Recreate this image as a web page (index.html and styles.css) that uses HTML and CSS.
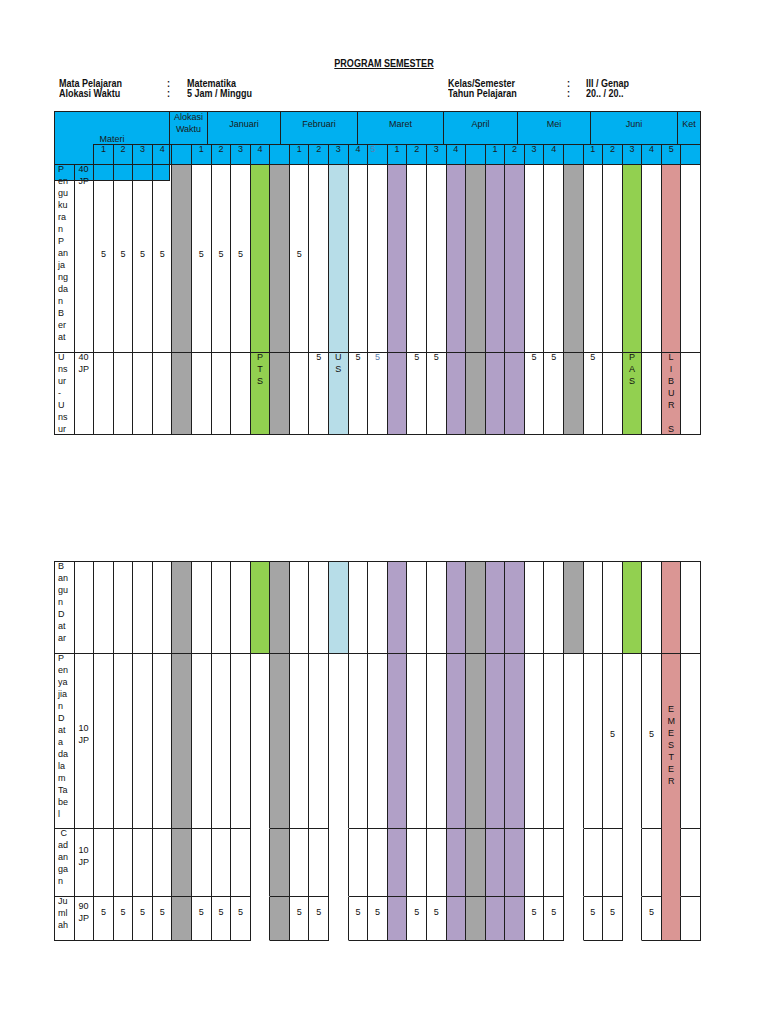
FILE: index.html
```html
<!DOCTYPE html>
<html lang="id">
<head>
<meta charset="utf-8">
<title>Program Semester</title>
<link rel="stylesheet" href="styles.css">
</head>
<body>
<div class="page">
  <h1 class="title">PROGRAM SEMESTER</h1>
  <div class="info">
    <div class="info-col left">
      <div class="info-row"><span>Mata Pelajaran</span><span>:</span><span>Matematika</span></div>
      <div class="info-row"><span>Alokasi Waktu</span><span>:</span><span>5 Jam / Minggu</span></div>
    </div>
    <div class="info-col right">
      <div class="info-row"><span>Kelas/Semester</span><span>:</span><span>III / Genap</span></div>
      <div class="info-row"><span>Tahun Pelajaran</span><span>:</span><span>20.. / 20..</span></div>
    </div>
  </div>

  <div class="sheet sheet-1">
    <div class="materi-box">Materi</div>
    <div class="hdr1">
      <div class="h h-materi"></div>
      <div class="h h-alok" style="width:38px"><span>Alokasi<br>Waktu</span></div>
      <div class="h" style="width:73px">Januari</div>
      <div class="h" style="width:77px">Februari</div>
      <div class="h" style="width:86px">Maret</div>
      <div class="h" style="width:74px">April</div>
      <div class="h" style="width:73px">Mei</div>
      <div class="h" style="width:87px">Juni</div>
      <div class="h" style="width:23px">Ket</div>
    </div>
    <div class="grid grid-1">
      <!-- header row 2 -->
      <div class="c hd hd-first"></div>
      <div class="c hd">1</div><div class="c hd">2</div><div class="c hd">3</div><div class="c hd">4</div>
      <div class="c hd"></div>
      <div class="c hd">1</div><div class="c hd">2</div><div class="c hd">3</div><div class="c hd">4</div>
      <div class="c hd"></div>
      <div class="c hd">1</div><div class="c hd">2</div><div class="c hd">3</div><div class="c hd">4</div>
      <div class="c hd hd-5">5</div>
      <div class="c hd">1</div><div class="c hd">2</div><div class="c hd">3</div><div class="c hd">4</div>
      <div class="c hd"></div>
      <div class="c hd">1</div><div class="c hd">2</div><div class="c hd">3</div><div class="c hd">4</div>
      <div class="c hd"></div>
      <div class="c hd">1</div><div class="c hd">2</div><div class="c hd">3</div><div class="c hd">4</div><div class="c hd">5</div>
      <div class="c hd"></div>

      <!-- row: Pengukuran Panjang dan Berat -->
      <div class="c l bt"><span>P<br>en<br>gu<br>ku<br>ra<br>n<br>P<br>an<br>ja<br>ng<br>da<br>n<br>B<br>er<br>at</span></div>
      <div class="c l2 bt"><span>40<br>JP</span></div>
      <div class="c ma bt"><span>5</span></div>
      <div class="c ma bt"><span>5</span></div>
      <div class="c ma bt"><span>5</span></div>
      <div class="c ma bt5"><span>5</span></div>
      <div class="c g"></div>
      <div class="c ma"><span>5</span></div>
      <div class="c ma"><span>5</span></div>
      <div class="c ma"><span>5</span></div>
      <div class="c gr"></div>
      <div class="c g"></div>
      <div class="c ma"><span>5</span></div>
      <div class="c"></div>
      <div class="c lb"></div>
      <div class="c"></div>
      <div class="c"></div>
      <div class="c pu"></div>
      <div class="c"></div>
      <div class="c"></div>
      <div class="c pu"></div>
      <div class="c g"></div>
      <div class="c pu"></div>
      <div class="c pu"></div>
      <div class="c"></div>
      <div class="c"></div>
      <div class="c g"></div>
      <div class="c"></div>
      <div class="c"></div>
      <div class="c gr"></div>
      <div class="c"></div>
      <div class="c pk"></div>
      <div class="c"></div>

      <!-- row: Unsur-Unsur -->
      <div class="c l"><span>U<br>ns<br>ur<br>-<br>U<br>ns<br>ur</span></div>
      <div class="c l2"><span>40<br>JP</span></div>
      <div class="c"></div>
      <div class="c"></div>
      <div class="c"></div>
      <div class="c"></div>
      <div class="c g"></div>
      <div class="c"></div>
      <div class="c"></div>
      <div class="c"></div>
      <div class="c gr"><span>P<br>T<br>S</span></div>
      <div class="c g"></div>
      <div class="c"></div>
      <div class="c"><span>5</span></div>
      <div class="c lb"><span>U<br>S</span></div>
      <div class="c"><span>5</span></div>
      <div class="c bl"><span>5</span></div>
      <div class="c pu"></div>
      <div class="c"><span>5</span></div>
      <div class="c"><span>5</span></div>
      <div class="c pu"></div>
      <div class="c g"></div>
      <div class="c pu"></div>
      <div class="c pu"></div>
      <div class="c"><span>5</span></div>
      <div class="c"><span>5</span></div>
      <div class="c g"></div>
      <div class="c"><span>5</span></div>
      <div class="c"></div>
      <div class="c gr"><span>P<br>A<br>S</span></div>
      <div class="c"></div>
      <div class="c pk"><span>L<br>I<br>B<br>U<br>R<br><br>S</span></div>
      <div class="c"></div>
    </div>
  </div>

  <div class="sheet sheet-2">
    <div class="grid grid-2">
      <!-- row: Bangun Datar -->
      <div class="c l"><span>B<br>an<br>gu<br>n<br>D<br>at<br>ar</span></div>
      <div class="c"></div>
      <div class="c"></div>
      <div class="c"></div>
      <div class="c"></div>
      <div class="c"></div>
      <div class="c g"></div>
      <div class="c"></div>
      <div class="c"></div>
      <div class="c"></div>
      <div class="c gr"></div>
      <div class="c g"></div>
      <div class="c"></div>
      <div class="c"></div>
      <div class="c lb"></div>
      <div class="c"></div>
      <div class="c"></div>
      <div class="c pu"></div>
      <div class="c"></div>
      <div class="c"></div>
      <div class="c pu"></div>
      <div class="c g"></div>
      <div class="c pu"></div>
      <div class="c pu"></div>
      <div class="c"></div>
      <div class="c"></div>
      <div class="c g"></div>
      <div class="c"></div>
      <div class="c"></div>
      <div class="c gr"></div>
      <div class="c"></div>
      <div class="c pk"></div>
      <div class="c"></div>

      <!-- row: Penyajian Data dalam Tabel -->
      <div class="c l"><span>P<br>en<br>ya<br>jia<br>n<br>D<br>at<br>a<br>da<br>la<br>m<br>Ta<br>be<br>l</span></div>
      <div class="c l2 m"><span>10<br>JP</span></div>
      <div class="c"></div>
      <div class="c"></div>
      <div class="c"></div>
      <div class="c"></div>
      <div class="c g"></div>
      <div class="c"></div>
      <div class="c"></div>
      <div class="c"></div>
      <div class="c nb"></div>
      <div class="c g"></div>
      <div class="c"></div>
      <div class="c"></div>
      <div class="c nb"></div>
      <div class="c"></div>
      <div class="c"></div>
      <div class="c pu"></div>
      <div class="c"></div>
      <div class="c"></div>
      <div class="c pu"></div>
      <div class="c g"></div>
      <div class="c pu"></div>
      <div class="c pu"></div>
      <div class="c"></div>
      <div class="c"></div>
      <div class="c nb"></div>
      <div class="c"></div>
      <div class="c m"><span>5</span></div>
      <div class="c nb"></div>
      <div class="c m"><span>5</span></div>
      <div class="c pk nb em"><span>E<br>M<br>E<br>S<br>T<br>E<br>R</span></div>
      <div class="c"></div>

      <!-- row: Cadangan -->
      <div class="c l"><span>&nbsp;C<br>ad<br>an<br>ga<br>n</span></div>
      <div class="c l2 m"><span>10<br>JP</span></div>
      <div class="c"></div>
      <div class="c"></div>
      <div class="c"></div>
      <div class="c"></div>
      <div class="c g"></div>
      <div class="c"></div>
      <div class="c"></div>
      <div class="c"></div>
      <div class="c nb"></div>
      <div class="c g"></div>
      <div class="c"></div>
      <div class="c"></div>
      <div class="c nb"></div>
      <div class="c"></div>
      <div class="c"></div>
      <div class="c pu"></div>
      <div class="c"></div>
      <div class="c"></div>
      <div class="c pu"></div>
      <div class="c g"></div>
      <div class="c pu"></div>
      <div class="c pu"></div>
      <div class="c"></div>
      <div class="c"></div>
      <div class="c nb"></div>
      <div class="c"></div>
      <div class="c"></div>
      <div class="c nb"></div>
      <div class="c"></div>
      <div class="c pk nb"></div>
      <div class="c"></div>

      <!-- row: Jumlah -->
      <div class="c l"><span>Ju<br>ml<br>ah</span></div>
      <div class="c l2 m"><span>90<br>JP</span></div>
      <div class="c m"><span>5</span></div>
      <div class="c m"><span>5</span></div>
      <div class="c m"><span>5</span></div>
      <div class="c m"><span>5</span></div>
      <div class="c g"></div>
      <div class="c m"><span>5</span></div>
      <div class="c m"><span>5</span></div>
      <div class="c m"><span>5</span></div>
      <div class="c nb"></div>
      <div class="c g"></div>
      <div class="c m"><span>5</span></div>
      <div class="c m"><span>5</span></div>
      <div class="c nb"></div>
      <div class="c m"><span>5</span></div>
      <div class="c m"><span>5</span></div>
      <div class="c pu"></div>
      <div class="c m"><span>5</span></div>
      <div class="c m"><span>5</span></div>
      <div class="c pu"></div>
      <div class="c g"></div>
      <div class="c pu"></div>
      <div class="c pu"></div>
      <div class="c m"><span>5</span></div>
      <div class="c m"><span>5</span></div>
      <div class="c nb"></div>
      <div class="c m"><span>5</span></div>
      <div class="c m"><span>5</span></div>
      <div class="c nb"></div>
      <div class="c m"><span>5</span></div>
      <div class="c pk"></div>
      <div class="c"></div>
    </div>
  </div>
</div>
</body>
</html>
```

FILE: styles.css
```css
* { box-sizing: border-box; }

body {
  margin: 0;
  background: #ffffff;
  color: #111111;
  font-family: "Liberation Sans", Arial, sans-serif;
}

.page {
  width: 768px;
  padding-top: 57px;
}

.title {
  margin: 0;
  font-family: "Liberation Sans Narrow", "Arial Narrow", "Liberation Sans", sans-serif;
  font-weight: bold;
  font-size: 10.5px;
  line-height: 12px;
  text-align: center;
  text-decoration: underline;
  color: #111111;
  transform: scaleX(0.86);
}

.info {
  display: flex;
  padding-left: 59px;
  margin-top: 10px;
  font-family: "Liberation Sans Narrow", "Arial Narrow", "Liberation Sans", sans-serif;
  font-weight: bold;
  font-size: 10px;
  line-height: 10px;
  color: #111111;
}

.info-col.left { width: 389px; }

.info-row { display: grid; }
.left .info-row { grid-template-columns: 108px 20px auto; }
.right .info-row { grid-template-columns: 119px 19px auto; }
.info-row span {
  display: inline-block;
  transform: scaleX(0.9);
  transform-origin: left center;
  white-space: nowrap;
}

/* ---------- sheet ---------- */
.sheet {
  position: relative;
  margin-left: 54px;
  width: 647px;
  border-left: 1px solid #1e1e1e;
  border-top: 1px solid #1e1e1e;
  font-size: 9px;
  line-height: 12px;
  color: #111111;
}

.sheet-1 { margin-top: 12px; }
.sheet-2 { margin-top: 126px; }

.materi-box {
  position: absolute;
  left: -1px;
  top: -1px;
  width: 116px;
  height: 70px;
  border: 1px solid #1e1e1e;
  padding-top: 23px;
  line-height: 9px;
  text-align: center;
  color: #1a1a1a;
}

.hdr1 {
  display: flex;
  height: 32px;
  background: #00b0f0;
  color: #1a1a1a;
}

.h {
  border-right: 1px solid #1e1e1e;
  display: flex;
  align-items: center;
  justify-content: center;
  padding-bottom: 8px;
  text-align: center;
}

.h-materi { width: 115px; border-right: 0; }

.h-alok {
  align-items: flex-start;
  padding-bottom: 0;
}
.h-alok span { margin-top: -1.5px; }

.grid {
  display: grid;
  grid-template-columns: repeat(33, 1fr);
}
.grid-1 { grid-template-rows: 21px 188px 82px; }
.grid-2 { grid-template-rows: 92px 175px 68px 44px; }

.c {
  border-right: 1px solid #1e1e1e;
  border-bottom: 1px solid #1e1e1e;
  display: flex;
  flex-direction: column;
  align-items: center;
  white-space: nowrap;
  text-align: center;
  min-width: 0;
}
.c > span { margin-top: -2.5px; }

.hd {
  border-top: 1px solid #1e1e1e;
  background: #00b0f0;
  line-height: 7px;
  padding-top: 0.5px;
  color: #1a1a1a;
}
.hd-first {
  grid-column: span 2;
  border-top: 0;
}
.hd-5 {
  align-items: flex-start;
  padding-left: 2px;
  color: #5a7cab;
}

.l { align-items: flex-start; text-align: left; padding-left: 3px; }
.l2 { align-items: flex-start; text-align: left; padding-left: 4px; }

.m { justify-content: center; padding-bottom: 14px; }
.ma { justify-content: center; padding-bottom: 10px; }
.m > span, .ma > span { margin-top: 0; }

.em { justify-content: center; padding-top: 7px; }
.em > span { margin-top: 0; }

/* top blue strip of the first data row (inside the Materi box) */
.bt { background: linear-gradient(#00b0f0 15px, #ffffff 15px); }
.bt5 {
  background:
    linear-gradient(to left, #ffffff 2px, transparent 2px),
    linear-gradient(#00b0f0 15px, #ffffff 15px);
}

.g  { background: #a5a5a5; }
.gr { background: #92d050; }
.lb { background: #b7dde8; }
.pu { background: #b1a0c7; }
.pk { background: #da9694; }
.bl { color: #5a7cab; }

.nb { border-bottom-color: transparent; }
```
